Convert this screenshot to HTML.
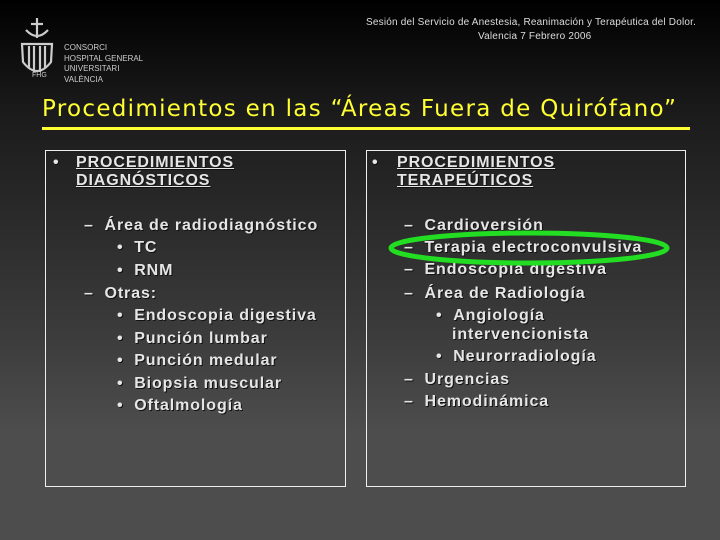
<!DOCTYPE html>
<html><head><meta charset="utf-8"><style>
*{margin:0;padding:0}
body{width:720px;height:540px;overflow:hidden;background:linear-gradient(#000 0%,#1a1a1a 20%,#3a3a3a 60%,#4d4d4d 80%,#4d4d4d 100%);position:relative;font-family:"Liberation Sans",Arial,sans-serif}
.t{position:absolute;color:#e6e6e6;font-family:"Liberation Sans",Arial,sans-serif;font-weight:700;font-size:16px;letter-spacing:0.9px;white-space:nowrap;line-height:18px;text-shadow:1px 1px 0 #111}
.u{text-decoration:underline}
.box{position:absolute;border:1px solid #eee;top:150px;height:335px}
.s{position:absolute;color:#ddd;font-family:"Liberation Sans",Arial,sans-serif;white-space:nowrap}
</style></head><body>
<div class="s" style="left:366px;top:17px;font-size:10px;letter-spacing:0.2px">Sesión del Servicio de Anestesia, Reanimación y Terapéutica del Dolor.</div>
<div class="s" style="left:478px;top:31px;font-size:10px;letter-spacing:0.2px">Valencia 7 Febrero 2006</div>
<svg style="position:absolute;left:18px;top:16px" width="38" height="64" viewBox="0 0 38 64">
<g fill="none" stroke="#ccc" stroke-width="2.2">
<line x1="19" y1="2" x2="19" y2="22"/><path d="M8 14 Q19 26 30 14"/><path d="M13 8 L25 8"/>
<path d="M4 28 L34 28 L33 46 Q19 64 5 46 Z"/>
<line x1="11" y1="30" x2="11" y2="52"/><line x1="16" y1="30" x2="16" y2="56"/><line x1="22" y1="30" x2="22" y2="56"/><line x1="27" y1="30" x2="27" y2="52"/>
</g></svg>
<div class="s" style="left:64px;top:43px;font-size:8px;line-height:10.5px;color:#ccc">CONSORCI<br>HOSPITAL GENERAL<br>UNIVERSITARI<br>VALÈNCIA</div>
<div class="s" style="left:32px;top:72px;font-size:7px;color:#ccc">FHG</div>
<div style="position:absolute;left:42px;top:96px;color:#ffff33;font-size:23px;font-family:'DejaVu Sans',sans-serif;white-space:nowrap;letter-spacing:1.3px">Procedimientos en las “Áreas Fuera de Quirófano”</div>
<div style="position:absolute;left:42px;top:127px;width:648px;height:3px;background:#ffff33"></div>
<div class="box" style="left:45px;width:299px"></div>
<div class="box" style="left:366px;width:318px"></div>

<div class="t" style="left:53px;top:154px">•</div>
<div class="t u" style="left:76px;top:154px">PROCEDIMIENTOS</div>
<div class="t u" style="left:76px;top:172px">DIAGNÓSTICOS</div>
<div class="t" style="left:84px;top:217px">–&nbsp;&nbsp;Área de radiodiagnóstico</div>
<div class="t" style="left:117px;top:239px">•&nbsp;&nbsp;TC</div>
<div class="t" style="left:117px;top:262px">•&nbsp;&nbsp;RNM</div>
<div class="t" style="left:84px;top:285px">–&nbsp;&nbsp;Otras:</div>
<div class="t" style="left:117px;top:307px">•&nbsp;&nbsp;Endoscopia digestiva</div>
<div class="t" style="left:117px;top:330px">•&nbsp;&nbsp;Punción lumbar</div>
<div class="t" style="left:117px;top:352px">•&nbsp;&nbsp;Punción medular</div>
<div class="t" style="left:117px;top:375px">•&nbsp;&nbsp;Biopsia muscular</div>
<div class="t" style="left:117px;top:397px">•&nbsp;&nbsp;Oftalmología</div>

<div class="t" style="left:372px;top:154px">•</div>
<div class="t u" style="left:397px;top:154px">PROCEDIMIENTOS</div>
<div class="t u" style="left:397px;top:172px">TERAPEÚTICOS</div>
<div class="t" style="left:404px;top:217px">–&nbsp;&nbsp;Cardioversión</div>
<div class="t" style="left:404px;top:239px">–&nbsp;&nbsp;Terapia electroconvulsiva</div>
<div class="t" style="left:404px;top:261px">–&nbsp;&nbsp;Endoscopia digestiva</div>
<div class="t" style="left:404px;top:285px">–&nbsp;&nbsp;Área de Radiología</div>
<div class="t" style="left:436px;top:307px">•&nbsp;&nbsp;Angiología</div>
<div class="t" style="left:452px;top:326px">intervencionista</div>
<div class="t" style="left:436px;top:348px">•&nbsp;&nbsp;Neurorradiología</div>
<div class="t" style="left:404px;top:371px">–&nbsp;&nbsp;Urgencias</div>
<div class="t" style="left:404px;top:393px">–&nbsp;&nbsp;Hemodinámica</div>
<svg style="position:absolute;left:385px;top:226px" width="290" height="44"><ellipse cx="144" cy="22" rx="138" ry="15" fill="none" stroke="#22dd22" stroke-width="5"/></svg>
</body></html>
